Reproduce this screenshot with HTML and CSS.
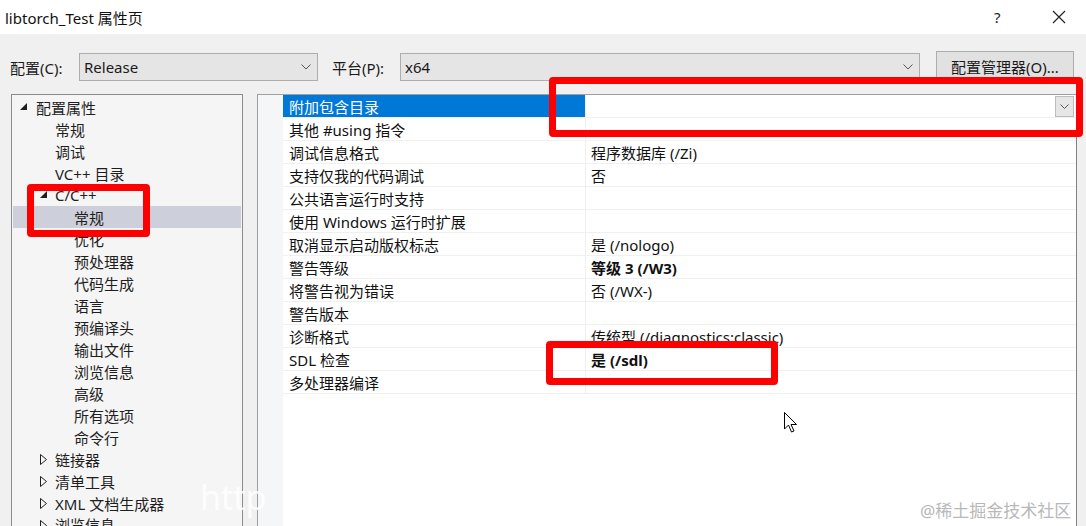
FILE: index.html
```html
<!DOCTYPE html>
<html lang="zh">
<head>
<meta charset="utf-8">
<title>libtorch_Test 属性页</title>
<link rel="stylesheet" href="styles.css">
</head>
<body>
<div class="window">
  <div class="titlebar">
    <span class="title">libtorch_Test 属性页</span>
    <span class="help">?</span>
    <span class="close"><svg width="14" height="14" viewBox="0 0 14 14"><path d="M1 1 L13 13 M13 1 L1 13" stroke="#222" stroke-width="1.2" fill="none"/></svg></span>
  </div>
  <div class="configrow">
    <span class="lbl">配置(C):</span>
    <div class="combo combo-config"><span>Release</span><svg class="chev" width="10" height="6" viewBox="0 0 10 6"><path d="M0.5 0.5 L5 5 L9.5 0.5" stroke="#555" fill="none"/></svg></div>
    <span class="lbl lbl-plat">平台(P):</span>
    <div class="combo combo-plat"><span>x64</span><svg class="chev" width="10" height="6" viewBox="0 0 10 6"><path d="M0.5 0.5 L5 5 L9.5 0.5" stroke="#555" fill="none"/></svg></div>
    <div class="btn">配置管理器(O)...</div>
  </div>
  <div class="main">
    <div class="tree">
      <div class="ti l0"><svg class="tri" width="8" height="8" viewBox="0 0 8 8"><polygon points="7,0 7,7 0,7" fill="#1e1e1e"/></svg>配置属性</div>
      <div class="ti l1">常规</div>
      <div class="ti l1">调试</div>
      <div class="ti l1">VC++ 目录</div>
      <div class="ti l1 exp"><svg class="tri" width="8" height="8" viewBox="0 0 8 8"><polygon points="7,0 7,7 0,7" fill="#1e1e1e"/></svg>C/C++</div>
      <div class="ti l2 sel">常规</div>
      <div class="ti l2">优化</div>
      <div class="ti l2">预处理器</div>
      <div class="ti l2">代码生成</div>
      <div class="ti l2">语言</div>
      <div class="ti l2">预编译头</div>
      <div class="ti l2">输出文件</div>
      <div class="ti l2">浏览信息</div>
      <div class="ti l2">高级</div>
      <div class="ti l2">所有选项</div>
      <div class="ti l2">命令行</div>
      <div class="ti l1 exp"><svg class="tri tri-o" width="8" height="11" viewBox="0 0 8 11"><polygon points="0.5,0.5 6.5,5.5 0.5,10.5" fill="none" stroke="#1e1e1e"/></svg>链接器</div>
      <div class="ti l1 exp"><svg class="tri tri-o" width="8" height="11" viewBox="0 0 8 11"><polygon points="0.5,0.5 6.5,5.5 0.5,10.5" fill="none" stroke="#1e1e1e"/></svg>清单工具</div>
      <div class="ti l1 exp"><svg class="tri tri-o" width="8" height="11" viewBox="0 0 8 11"><polygon points="0.5,0.5 6.5,5.5 0.5,10.5" fill="none" stroke="#1e1e1e"/></svg>XML 文档生成器</div>
      <div class="ti l1 exp last"><svg class="tri tri-o" width="8" height="11" viewBox="0 0 8 11"><polygon points="0.5,0.5 6.5,5.5 0.5,10.5" fill="none" stroke="#1e1e1e"/></svg>浏览信息</div>
    </div>
    <div class="grid">
      <div class="gutter"></div>
      <div class="rows">
        <div class="row selrow"><div class="name">附加包含目录</div><div class="val"><span></span><span class="dd"><svg width="9" height="5" viewBox="0 0 9 5"><path d="M0.5 0.5 L4.5 4.5 L8.5 0.5" stroke="#555" fill="none"/></svg></span></div></div>
        <div class="row"><div class="name">其他 #using 指令</div><div class="val"></div></div>
        <div class="row"><div class="name">调试信息格式</div><div class="val">程序数据库 (/Zi)</div></div>
        <div class="row"><div class="name">支持仅我的代码调试</div><div class="val">否</div></div>
        <div class="row"><div class="name">公共语言运行时支持</div><div class="val"></div></div>
        <div class="row"><div class="name">使用 Windows 运行时扩展</div><div class="val"></div></div>
        <div class="row"><div class="name">取消显示启动版权标志</div><div class="val">是 (/nologo)</div></div>
        <div class="row"><div class="name">警告等级</div><div class="val b">等级 3 (/W3)</div></div>
        <div class="row"><div class="name">将警告视为错误</div><div class="val">否 (/WX-)</div></div>
        <div class="row"><div class="name">警告版本</div><div class="val"></div></div>
        <div class="row"><div class="name">诊断格式</div><div class="val">传统型 (/diagnostics:classic)</div></div>
        <div class="row"><div class="name">SDL 检查</div><div class="val b">是 (/sdl)</div></div>
        <div class="row"><div class="name">多处理器编译</div><div class="val"></div></div>
      </div>
    </div>
  </div>
  <div class="mark mark1"></div>
  <div class="mark mark2"></div>
  <div class="mark mark3"></div>
  <svg class="cursor" width="16" height="24" viewBox="0 0 16 24"><path d="M0.5 0.5 L0.5 17 L4.5 13 L7.5 20 L10 19 L7 12.5 L12.5 12.5 Z" fill="#fff" stroke="#000" stroke-width="1"/></svg>
  <div class="wm-http">http</div>
  <div class="wm">@稀土掘金技术社区</div>
</div>
</body>
</html>
```

FILE: styles.css
```css
* { box-sizing: border-box; }
html, body { margin: 0; padding: 0; }
body {
  width: 1086px;
  height: 526px;
  overflow: hidden;
  background: #f0f0f0;
  font-family: "Noto Sans", "Noto Sans CJK SC", sans-serif;
  font-size: 15px;
  color: #1a1a1a;
}
.window { position: relative; width: 1086px; height: 526px; overflow: hidden; }
.titlebar {
  height: 34px;
  background: #fff;
  display: flex;
  align-items: center;
  padding-left: 5px;
  font-size: 15px;
  color: #111;
}
.title { flex: 1; }
.help { width: 58px; font-size: 15px; color: #222; }
.close { width: 34px; display: flex; align-items: center; }
.configrow {
  display: flex;
  align-items: center;
  height: 60px;
  padding: 6px 0 0 10px;
}
.lbl { font-size: 15px; width: 69px; }
.lbl-plat { margin-left: 14px; width: 68px; }
.combo {
  height: 28px;
  border: 1px solid #adadad;
  background: #e5e5e5;
  display: flex;
  align-items: center;
  justify-content: space-between;
  padding: 0 6px 0 4px;
  font-size: 15px;
}
.combo-config { width: 239px; }
.combo-plat { width: 520px; }
.btn {
  margin-left: 16px;
  width: 138px;
  height: 31px;
  border: 1px solid #adadad;
  background: #e1e1e1;
  display: flex;
  align-items: center;
  justify-content: center;
  font-size: 15px;
  margin-top: -1px;
}
.main {
  display: flex;
  padding-left: 11px;
  height: 432px;
}
.tree {
  width: 232px;
  height: 460px;
  border: 1px solid #8c8c8c;
  background: #f5f5f5;
  padding: 1px;
  font-size: 15px;
  color: #1e1e1e;
}
.ti {
  height: 22px;
  display: flex;
  align-items: center;
  position: relative;
  white-space: nowrap;
}
.ti .tri { position: absolute; }
.l0 { padding-left: 23px; }
.l0 .tri { left: 7px; top: 7px; }
.l1 { padding-left: 42px; }
.l1 .tri { left: 27px; top: 7px; }
.l1 .tri-o { top: 6px; }
.l2 { padding-left: 61px; }
.last { height: 14px; align-items: flex-start; overflow: visible; }
.sel { background: #cdd0da; }
.grid {
  margin-left: 14px;
  width: 820px;
  height: 460px;
  border: 1px solid #a0a0a0;
  border-right: 1px solid #828282;
  background: #fff;
  display: flex;
}
.gutter { width: 25px; background: #f5f6f8; }
.rows { flex: 1; }
.row {
  height: 23px;
  display: flex;
  border-bottom: 1px solid #f0f0f0;
  font-size: 15px;
  color: #111;
}
.name {
  width: 303px;
  padding-left: 6px;
  display: flex;
  align-items: center;
  border-right: 1px solid #f0f0f0;
  white-space: nowrap;
}
.val {
  flex: 1;
  padding-left: 5px;
  display: flex;
  align-items: center;
  justify-content: space-between;
  white-space: nowrap;
}
.val.b { font-weight: bold; }
.selrow .name { background: #0078d7; color: #fff; }
.dd {
  width: 19px;
  height: 21px;
  margin-right: 2px;
  border: 1px solid #bdbdbd;
  background: #e6e6e6;
  display: flex;
  align-items: center;
  justify-content: center;
}
.mark {
  position: absolute;
  border: 7px solid #ff0000;
  border-radius: 4px;
}
.mark1 { left: 549px; top: 77px; width: 534px; height: 60px; }
.mark2 { left: 27px; top: 184px; width: 123px; height: 53px; }
.mark3 { left: 546px; top: 341px; width: 232px; height: 44px; }
.cursor { position: absolute; left: 784px; top: 412px; }
.wm {
  position: absolute;
  left: 920px;
  top: 497px;
  font-size: 17px;
  color: #b8b8b8;
}
.wm-http {
  position: absolute;
  left: 200px;
  top: 474px;
  font-size: 34px;
  color: rgba(255,255,255,0.85);
  font-family: "Noto Sans", sans-serif;
}
```
